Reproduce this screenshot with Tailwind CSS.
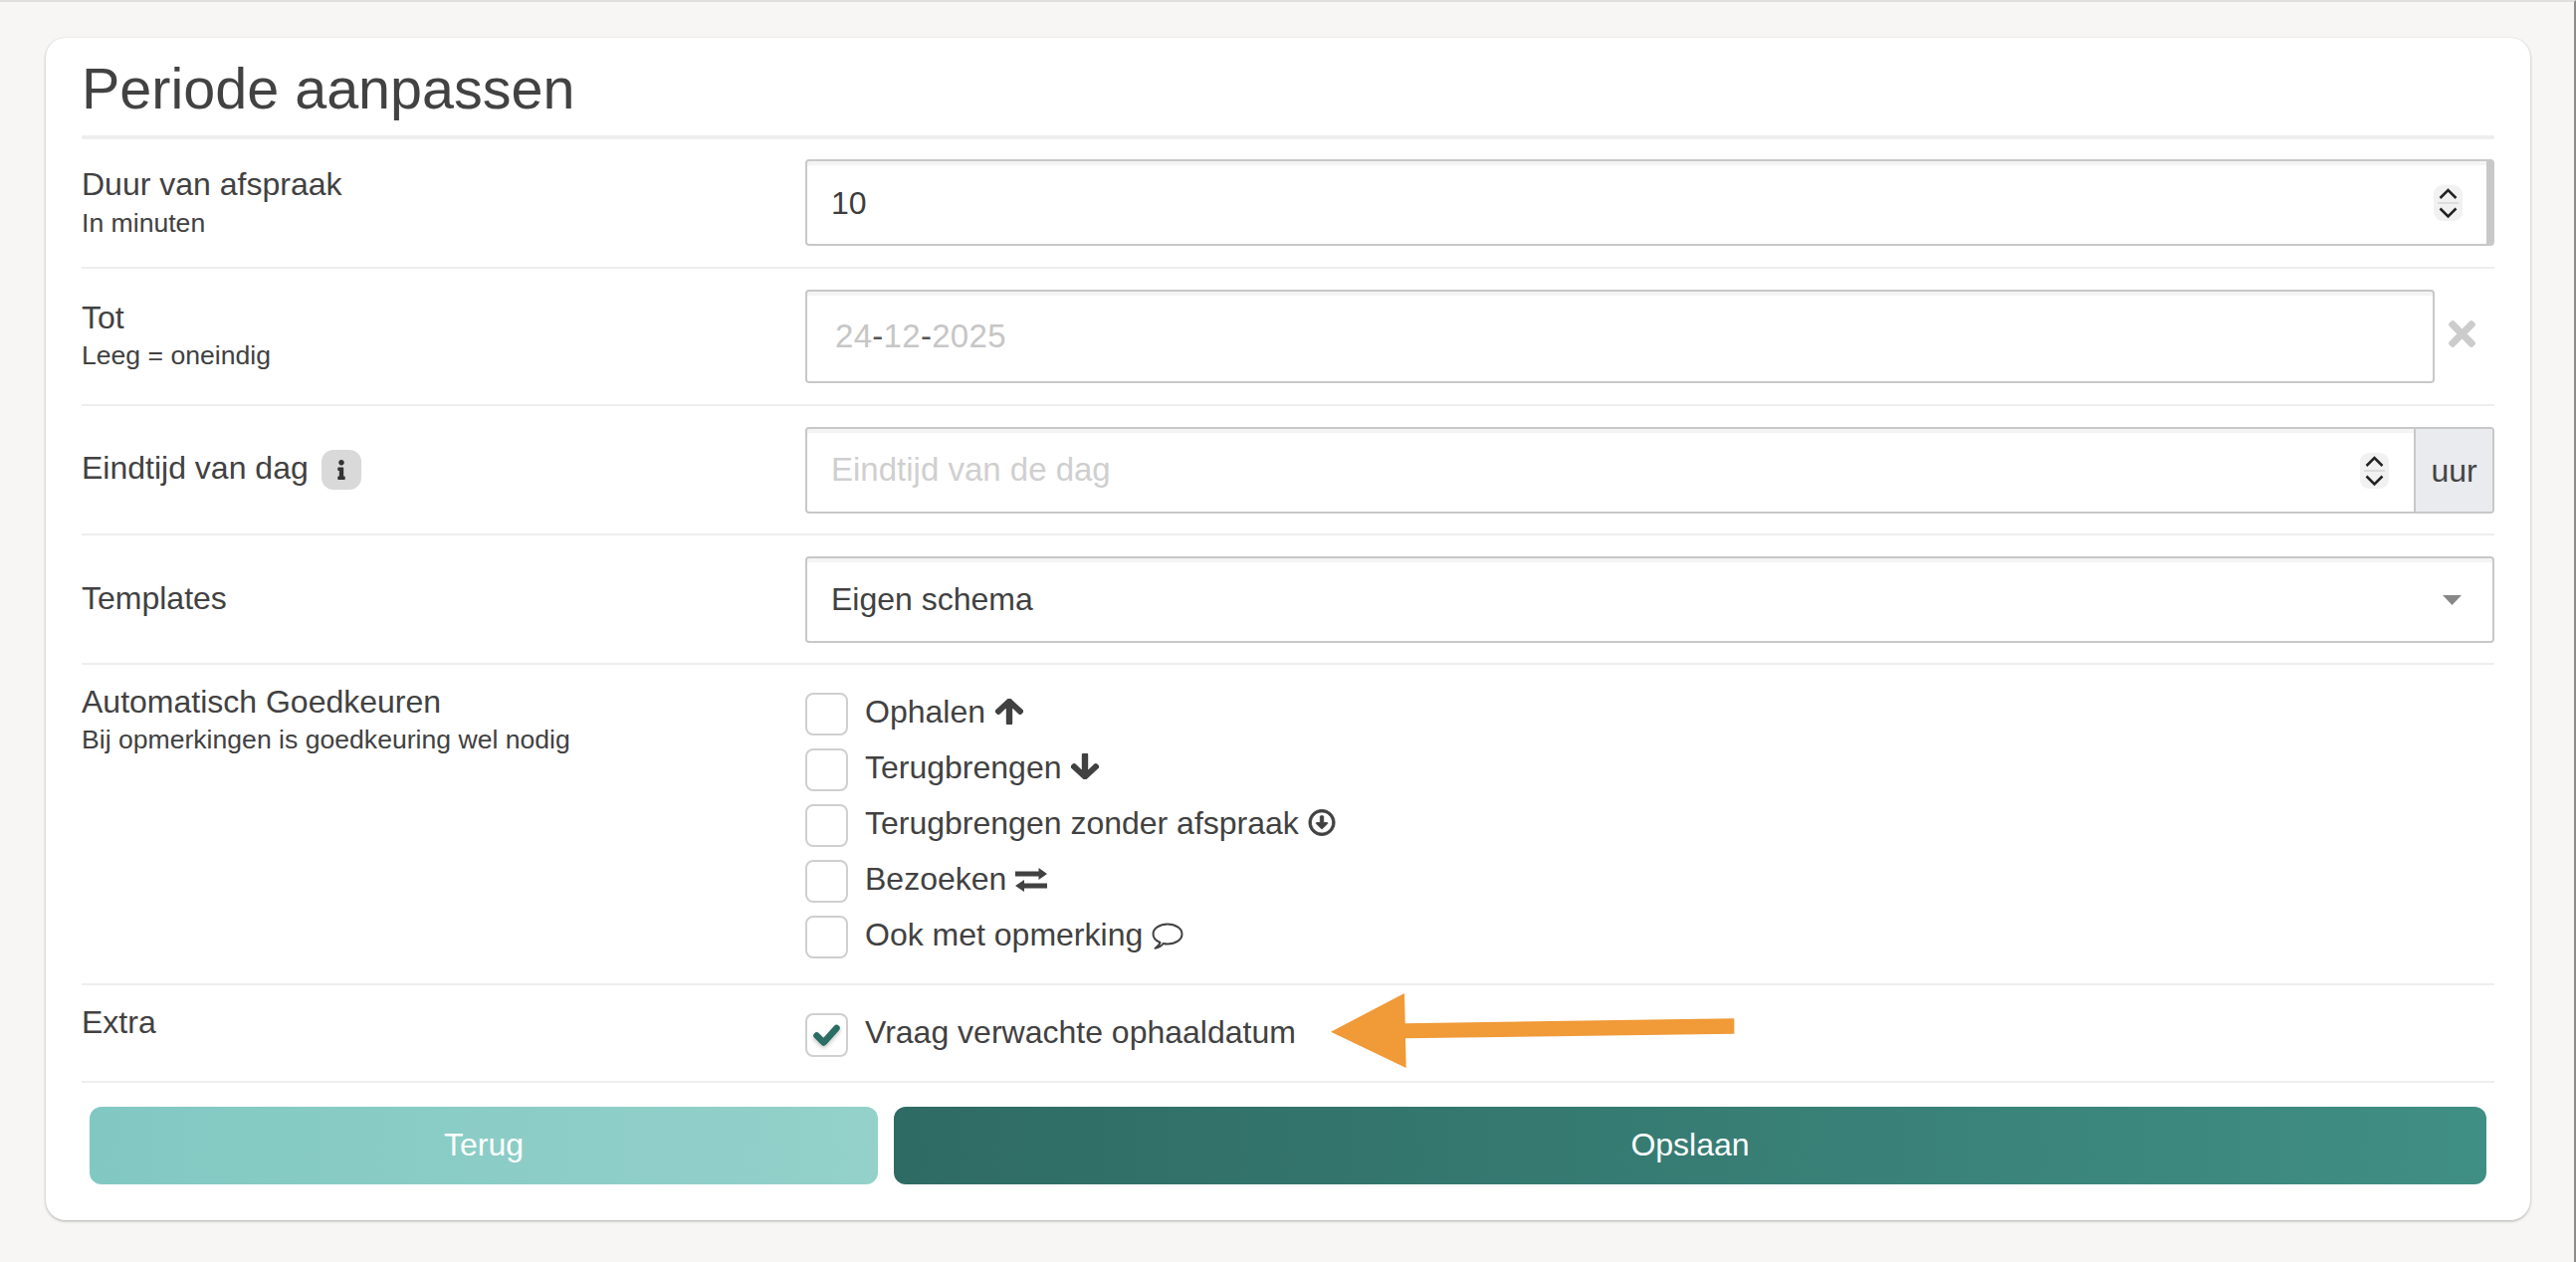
<!DOCTYPE html>
<html lang="nl">
<head>
  <meta charset="UTF-8" />
  <title>Periode aanpassen</title>
  <meta name="viewport" content="width=device-width, initial-scale=1" />
  <script src="https://cdn.jsdelivr.net/npm/@tailwindcss/browser@4"></script>
</head>
<body class="bg-[#f7f6f4] font-['Liberation_Sans',Arial,sans-serif] text-[#414141]">
<div class="h-[1268px] overflow-hidden border-t-2 border-r-2 border-t-[#dfdfdd] border-r-[#8c8c8c]">

  <!-- Card -->
  <div class="relative ml-[46px] mr-[44px] mt-[36px] h-[1188px] rounded-[20px] bg-white px-[36px] shadow-[0_1px_3px_rgba(0,0,0,0.3)]">

    <h1 class="h-[102px] border-b-4 border-[#eeeeee] pt-[18px] text-[57.5px] leading-[66px] text-[#424242]">Periode aanpassen</h1>

    <!-- Duur -->
    <div class="grid grid-cols-[727px_1fr] border-b-2 border-[#eeeeee]">
      <div class="pt-[26px]">
        <div class="text-[32px] leading-[38px]">Duur van afspraak</div>
        <div class="mt-[4px] text-[26.6px] leading-[32px]">In minuten</div>
      </div>
      <div class="pt-[20px] pb-[21px]">
        <div class="flex h-[87px] items-center rounded-[4px] border-2 border-r-[8px] border-[#c8c8c8] pr-[24px] shadow-[inset_0_4px_0_#f4f4f4]">
          <input type="text" value="10" class="min-w-0 flex-1 bg-transparent pl-[24px] text-[32px] text-[#3d3d3d] outline-none" />
          <svg class="h-[36px] w-[29px]" viewBox="0 0 29 36" fill="none"><rect width="29" height="36" rx="9" fill="#f1f1f1"/><path d="M6.5 13l8-8 8 8M6.5 23.5l8 8 8-8" stroke="#222222" stroke-width="2.5"/><path d="M4 18h21" stroke="#dcdcdc" stroke-width="2"/></svg>
        </div>
      </div>
    </div>

    <!-- Tot -->
    <div class="grid grid-cols-[727px_1fr] border-b-2 border-[#eeeeee]">
      <div class="pt-[30px]">
        <div class="text-[32px] leading-[38px]">Tot</div>
        <div class="mt-[3px] text-[26.6px] leading-[32px]">Leeg = oneindig</div>
      </div>
      <div class="flex items-center pt-[21px] pb-[21px]">
        <div class="flex h-[94px] w-[1637px] items-center rounded-[4px] border-2 border-[#c8c8c8] pl-[28px] text-[33px] tracking-[0.3px] text-[#c6c6c6] shadow-[inset_0_4px_0_#f4f4f4]">24<span class="text-[#555555]">-</span>12<span class="text-[#555555]">-</span>2025</div>
        <svg class="mb-[6px] ml-[14px] h-[27px] w-[27px]" viewBox="0 80 352 352" fill="#cccccc"><path d="M242.72 256l100.07-100.07c12.28-12.28 12.28-32.19 0-44.48l-22.24-22.24c-12.28-12.28-32.19-12.28-44.48 0L176 189.28 75.93 89.21c-12.28-12.28-32.19-12.28-44.48 0L9.21 111.45c-12.28 12.28-12.28 32.19 0 44.48L109.28 256 9.21 356.07c-12.28 12.28-12.28 32.19 0 44.48l22.24 22.24c12.28 12.28 32.2 12.28 44.48 0L176 322.72l100.07 100.07c12.28 12.28 32.2 12.28 44.48 0l22.24-22.24c12.28-12.28 12.28-32.19 0-44.48L242.72 256z"/></svg>
      </div>
    </div>

    <!-- Eindtijd -->
    <div class="grid grid-cols-[727px_1fr] border-b-2 border-[#eeeeee]">
      <div class="flex items-start pt-[43px]">
        <span class="text-[32px] leading-[38px]">Eindtijd van dag</span>
        <span class="ml-[13px] mt-[1px] flex h-[40px] w-[40px] items-center justify-center rounded-[12px] bg-[#d9d9d9]">
          <svg class="h-[20px] w-[8px]" viewBox="0 0 192 512" fill="#333333"><path d="M20 424.229h20V279.771H20c-11.046 0-20-8.954-20-20V212c0-11.046 8.954-20 20-20h112c11.046 0 20 8.954 20 20v212.229h20c11.046 0 20 8.954 20 20V492c0 11.046-8.954 20-20 20H20c-11.046 0-20-8.954-20-20v-47.771c0-11.046 8.954-20 20-20zM96 0C56.235 0 24 32.235 24 72s32.235 72 72 72 72-32.236 72-72S135.764 0 96 0z"/></svg>
        </span>
      </div>
      <div class="pt-[21px] pb-[20px]">
        <div class="flex h-[87px] items-stretch rounded-[4px] border-2 border-[#c8c8c8] shadow-[inset_0_4px_0_#f4f4f4]">
          <div class="flex flex-1 items-center pr-[25px]">
            <input type="text" placeholder="Eindtijd van de dag" class="mb-[2px] min-w-0 flex-1 bg-transparent pl-[24px] text-[33px] outline-none placeholder:text-[#cfcfcf]" />
            <svg class="h-[36px] w-[29px]" viewBox="0 0 29 36" fill="none"><rect width="29" height="36" rx="9" fill="#f1f1f1"/><path d="M6.5 13l8-8 8 8M6.5 23.5l8 8 8-8" stroke="#222222" stroke-width="2.5"/><path d="M4 18h21" stroke="#dcdcdc" stroke-width="2"/></svg>
          </div>
          <div class="flex w-[79px] items-center justify-center rounded-r-[2px] border-l-2 border-[#c8c8c8] bg-[#e9ebef] text-[32px] text-[#444444]">uur</div>
        </div>
      </div>
    </div>

    <!-- Templates -->
    <div class="grid grid-cols-[727px_1fr] border-b-2 border-[#eeeeee]">
      <div class="pt-[44px]">
        <div class="text-[32px] leading-[38px]">Templates</div>
      </div>
      <div class="pt-[21px] pb-[20px]">
        <div class="flex h-[87px] items-center justify-between rounded-[4px] border-2 border-[#c8c8c8] pl-[24px] pr-[31px] text-[32px] text-[#414141] shadow-[inset_0_4px_0_#f4f4f4]">
          <span class="mb-[2px]">Eigen schema</span>
          <svg class="h-[10px] w-[19px]" viewBox="0 0 19 10" fill="#888888"><path d="M0 0h19L9.5 10z"/></svg>
        </div>
      </div>
    </div>

    <!-- Automatisch goedkeuren -->
    <div class="grid grid-cols-[727px_1fr] border-b-2 border-[#eeeeee]">
      <div class="pt-[18px]">
        <div class="text-[32px] leading-[38px]">Automatisch Goedkeuren</div>
        <div class="mt-[3px] text-[26.6px] leading-[32px]">Bij opmerkingen is goedkeuring wel nodig</div>
      </div>
      <div class="flex flex-col gap-[13px] pt-[28px] pb-[25px] text-[32px] leading-[39px]">
        <label class="flex h-[43px] items-start">
          <span class="h-[43px] w-[43px] rounded-[8px] border-2 border-[#cfcfcf]"></span>
          <span class="ml-[17px]">Ophalen</span>
          <svg class="ml-[10px] mt-[6px] h-[26px] w-[28px]" viewBox="0 32 448 448" preserveAspectRatio="none" fill="#414141" stroke="#414141" stroke-width="22"><path d="M34.9 289.5l-22.2-22.2c-9.4-9.4-9.4-24.6 0-33.9L207 39c9.4-9.4 24.6-9.4 33.9 0l194.3 194.3c9.4 9.4 9.4 24.6 0 33.9L413 289.4c-9.5 9.5-25 9.3-34.3-.4L264 168.6V456c0 13.3-10.7 24-24 24h-32c-13.3 0-24-10.7-24-24V168.6L69.2 289.1c-9.3 9.8-24.8 10-34.3.4z"/></svg>
        </label>
        <label class="flex h-[43px] items-start">
          <span class="h-[43px] w-[43px] rounded-[8px] border-2 border-[#cfcfcf]"></span>
          <span class="ml-[17px]">Terugbrengen</span>
          <svg class="ml-[10px] mt-[5px] h-[26px] w-[28px]" viewBox="0 32 448 448" preserveAspectRatio="none" fill="#414141" stroke="#414141" stroke-width="22"><path d="M413.1 222.5l22.2 22.2c9.4 9.4 9.4 24.6 0 33.9L241 473c-9.4 9.4-24.6 9.4-33.9 0L12.7 278.6c-9.4-9.4-9.4-24.6 0-33.9l22.2-22.2c9.5-9.5 25-9.3 34.3.4L184 343.4V56c0-13.3 10.7-24 24-24h32c13.3 0 24 10.7 24 24v287.4l114.8-120.5c9.3-9.8 24.8-10 34.3-.4z"/></svg>
        </label>
        <label class="flex h-[43px] items-start">
          <span class="h-[43px] w-[43px] rounded-[8px] border-2 border-[#cfcfcf]"></span>
          <span class="ml-[17px]">Terugbrengen zonder afspraak</span>
          <svg class="ml-[9px] mt-[5px] h-[27px] w-[28px]" viewBox="0 0 512 512" fill="#414141" stroke="#414141" stroke-width="16"><path d="M256 8C119 8 8 119 8 256s111 248 248 248 248-111 248-248S393 8 256 8zm0 448c-110.5 0-200-89.5-200-200S145.5 56 256 56s200 89.5 200 200-89.5 200-200 200zm-32-316v116h-67c-10.7 0-16 12.9-8.5 20.5l99 99c4.7 4.7 12.3 4.7 17 0l99-99c7.6-7.6 2.2-20.5-8.5-20.5h-67V140c0-6.6-5.4-12-12-12h-40c-6.6 0-12 5.4-12 12z"/></svg>
        </label>
        <label class="flex h-[43px] items-start">
          <span class="h-[43px] w-[43px] rounded-[8px] border-2 border-[#cfcfcf]"></span>
          <span class="ml-[17px]">Bezoeken</span>
          <svg class="ml-[9px] mt-[8px] h-[24px] w-[32px]" viewBox="0 0 32 24" fill="#414141"><path d="M0 3.5h23.5V0L32 6l-8.5 6V8.5H0zM32 15.5H9V12L0 18l9 6v-3.5h23z"/></svg>
        </label>
        <label class="flex h-[43px] items-start">
          <span class="h-[43px] w-[43px] rounded-[8px] border-2 border-[#cfcfcf]"></span>
          <span class="ml-[17px]">Ook met opmerking</span>
          <svg class="ml-[9px] mt-[7px] h-[27px] w-[32px]" viewBox="0 0 32 27" fill="none" stroke="#414141" stroke-width="2" stroke-linejoin="round"><path d="M8.5 20C4.5 18.3 1.5 15.2 1.5 11.5 1.5 5.7 8 1.5 16 1.5s14.5 4.2 14.5 10S24 21.5 16 21.5c-1.5 0-3-.2-4.4-.5-1.8 2.5-4.4 4.2-8.1 4.8 2.6-1.6 4.4-3.4 5-5.8z"/></svg>
        </label>
      </div>
    </div>

    <!-- Extra -->
    <div class="grid grid-cols-[727px_1fr] border-b-2 border-[#eeeeee]">
      <div class="pt-[18px]">
        <div class="text-[32px] leading-[38px]">Extra</div>
      </div>
      <div class="pt-[28px] pb-[24px] text-[32px] leading-[39px]">
        <label class="flex h-[44px] items-start">
          <span class="flex h-[44px] w-[43px] items-center justify-center rounded-[8px] border-2 border-[#cfcfcf]">
            <svg class="h-[22px] w-[27px] drop-shadow-[0_2px_2px_rgba(0,0,0,0.25)]" viewBox="0 0 27 22" fill="none"><path d="M3.5 11.5l7 7L23.5 4" stroke="#2a6d64" stroke-width="6.5" stroke-linecap="round" stroke-linejoin="round"/></svg>
          </span>
          <span class="ml-[17px]">Vraag verwachte ophaaldatum</span>
        </label>
      </div>
    </div>

    <!-- Knoppen -->
    <div class="mt-[24px] flex gap-[16px] px-[8px]">
      <button class="h-[78px] w-[792px] rounded-[12px] bg-linear-to-r from-[#82c8c2] to-[#93d1ca] pb-[2px] text-[32px] text-white">Terug</button>
      <button class="h-[78px] flex-1 rounded-[12px] bg-linear-to-r from-[#2e6b64] to-[#408f84] pb-[2px] text-[32px] text-white">Opslaan</button>
    </div>

    <!-- Pijl -->
    <svg class="absolute left-[1291px] top-[960px] h-[76px] w-[406px]" viewBox="0 0 406 76" fill="#f09a38"><path d="M0 38.7L74 0l.7 30.3 330.6-5v15.4L75 45.3l.7 29.7z"/></svg>
  </div>
</div>
</body>
</html>
